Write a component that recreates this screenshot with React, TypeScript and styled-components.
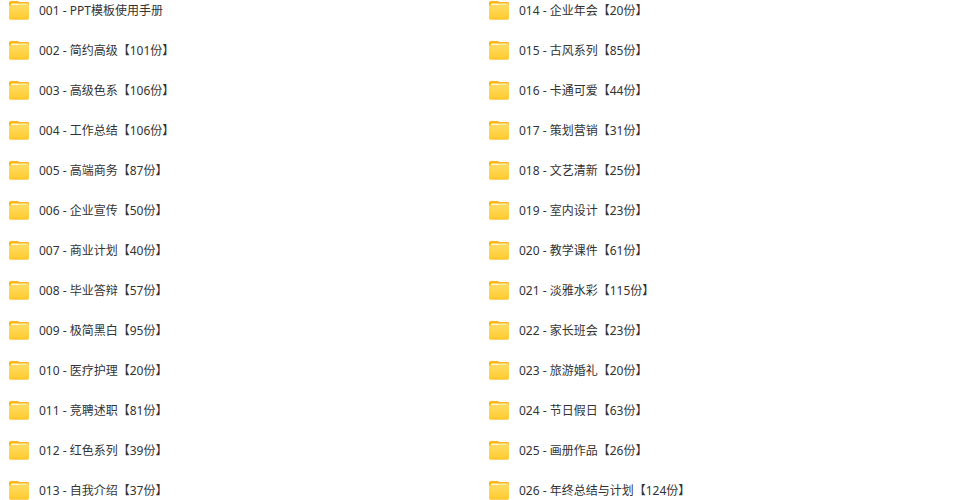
import React from "react";
import styled, { createGlobalStyle } from "styled-components";

const GlobalStyle = createGlobalStyle`
  * { box-sizing: border-box; }
  body {
    margin: 0;
    background: #fff;
    color: #333;
    font: 12px/20px "Noto Sans", "Noto Sans CJK SC", sans-serif;
    overflow: hidden;
  }
`;

const Columns = styled.main`
  display: grid;
  grid-template-columns: 1fr 1fr;
`;

const FolderList = styled.ul`
  margin: 0;
  padding: 0 0 0 8px;
  list-style: none;
  display: flex;
  flex-direction: column;
  gap: 18px;
`;

const FolderRow = styled.li`
  display: flex;
  align-items: center;
  gap: 9px;
  height: 22px;
  white-space: nowrap;
`;

const Icon = styled.svg`
  flex: none;
  width: 22px;
  height: 22px;
`;

const Name = styled.span``;

const left = [
  "001 - PPT模板使用手册",
  "002 - 简约高级【101份】",
  "003 - 高级色系【106份】",
  "004 - 工作总结【106份】",
  "005 - 高端商务【87份】",
  "006 - 企业宣传【50份】",
  "007 - 商业计划【40份】",
  "008 - 毕业答辩【57份】",
  "009 - 极简黑白【95份】",
  "010 - 医疗护理【20份】",
  "011 - 竞聘述职【81份】",
  "012 - 红色系列【39份】",
  "013 - 自我介绍【37份】",
];

const right = [
  "014 - 企业年会【20份】",
  "015 - 古风系列【85份】",
  "016 - 卡通可爱【44份】",
  "017 - 策划营销【31份】",
  "018 - 文艺清新【25份】",
  "019 - 室内设计【23份】",
  "020 - 教学课件【61份】",
  "021 - 淡雅水彩【115份】",
  "022 - 家长班会【23份】",
  "023 - 旅游婚礼【20份】",
  "024 - 节日假日【63份】",
  "025 - 画册作品【26份】",
  "026 - 年终总结与计划【124份】",
];

function FolderIcon() {
  return (
    <Icon viewBox="0 0 22 22" aria-hidden="true">
      <path
        d="M1 3Q1 1 3 1H9Q10 1 10.500 1.600L11 2H19.500Q21 2 21 3.500V12H1Z"
        fill="#fdb515"
      />
      <rect x="3" y="3.500" width="17" height="6" rx="0.500" fill="#fff3d2" />
      <path
        d="M1 6Q1 5 2 5H9.500L10.500 4.500H20Q21 4.500 21 5.500V18Q21 19.500 19.500 19.500H2.500Q1 19.500 1 18Z"
        fill="url(#folderFront)"
      />
      <path d="M2 19H20" stroke="#f9c02e" />
    </Icon>
  );
}

function Folders({ names }: { names: string[] }) {
  return (
    <FolderList>
      {names.map((name) => (
        <FolderRow key={name}>
          <FolderIcon />
          <Name>{name}</Name>
        </FolderRow>
      ))}
    </FolderList>
  );
}

const Gradients = styled.svg`
  position: absolute;
  width: 0;
  height: 0;
`;

export default function App() {
  return (
    <>
      <GlobalStyle />
      <Gradients aria-hidden="true">
        <linearGradient id="folderFront" x1="0" y1="0" x2="0" y2="1">
          <stop offset="0" stopColor="#ffdc63" />
          <stop offset="1" stopColor="#ffca2e" />
        </linearGradient>
      </Gradients>
      <Columns>
        <Folders names={left} />
        <Folders names={right} />
      </Columns>
    </>
  );
}
